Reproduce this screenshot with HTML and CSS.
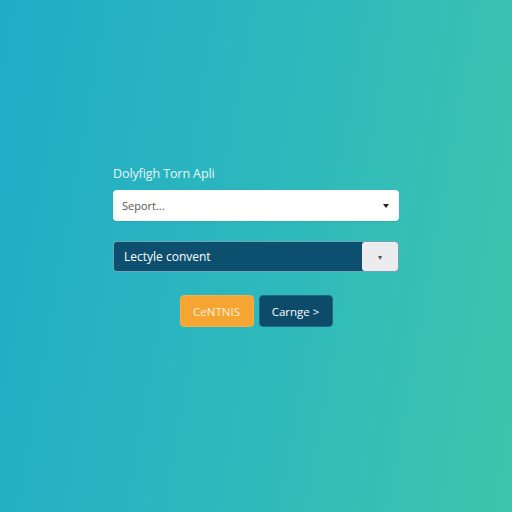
FILE: index.html
```html
<!DOCTYPE html>
<html>
<head>
<meta charset="utf-8">
<link rel="stylesheet" href="styles.css">
</head>
<body>
<div class="page">
  <div class="form">
    <div class="label">Dolyfigh Torn Apli</div>
    <div class="select light">
      <span class="ph">Seport...</span>
      <span class="caret"></span>
    </div>
    <div class="select dark">
      <span class="value">Lectyle convent</span>
      <span class="side"><span class="mini">&#9662;</span></span>
    </div>
    <div class="actions">
      <button class="btn orange">CeNTNIS</button>
      <button class="btn navy">Carnge &gt;</button>
    </div>
  </div>
</div>
</body>
</html>
```
FILE: styles.css
```css
html, body {
  margin: 0;
  padding: 0;
  height: 100%;
}
body {
  background: linear-gradient(100deg, #21abc7 0%, #2db8bd 50%, #3dc6ac 100%);
  font-family: "Open Sans", "Liberation Sans", sans-serif;
}
.page {
  height: 512px;
  display: flex;
  justify-content: center;
  padding-top: 166px;
  box-sizing: border-box;
}
.form {
  width: 286px;
  display: flex;
  flex-direction: column;
}
.label {
  color: #e6f7f6;
  font-size: 12.5px;
  line-height: 16px;
  height: 16px;
  margin-bottom: 8px;
  letter-spacing: -0.1px;
}
.select {
  height: 31px;
  box-sizing: border-box;
  border-radius: 4px;
  display: flex;
  align-items: center;
}
.light {
  background: #ffffff;
  padding: 0 10px 0 9px;
  justify-content: space-between;
  box-shadow: 0 1px 2px rgba(0,0,0,0.08);
}
.ph {
  color: #555;
  font-size: 11px;
}
.caret {
  width: 0;
  height: 0;
  border-left: 3px solid transparent;
  border-right: 3px solid transparent;
  border-top: 4px solid #222;
}
.dark {
  margin-top: 20px;
  background: #0c4f6f;
  border: 1px solid rgba(190, 235, 240, 0.55);
  overflow: hidden;
  padding-left: 10px;
  justify-content: space-between;
}
.value {
  color: #ffffff;
  font-size: 12px;
}
.side {
  width: 36px;
  height: 100%;
  background: #ececee;
  display: flex;
  align-items: center;
  justify-content: center;
  border-radius: 3px 0 0 3px;
}
.mini {
  color: #555;
  font-size: 8px;
}
.actions {
  margin-top: 23px;
  display: flex;
  justify-content: center;
  gap: 5px;
}
.btn {
  width: 74px;
  height: 32px;
  border-radius: 4px;
  font-family: "Open Sans", "Liberation Sans", sans-serif;
  font-size: 11.5px;
  color: #fff;
  padding: 0;
  cursor: pointer;
}
.orange {
  background: #f6a532;
  border: 1px solid #f3b04a;
  color: #fbefdc;
}
.navy {
  background: #0d4b6b;
  border: 1px solid #1d6a86;
}
```
